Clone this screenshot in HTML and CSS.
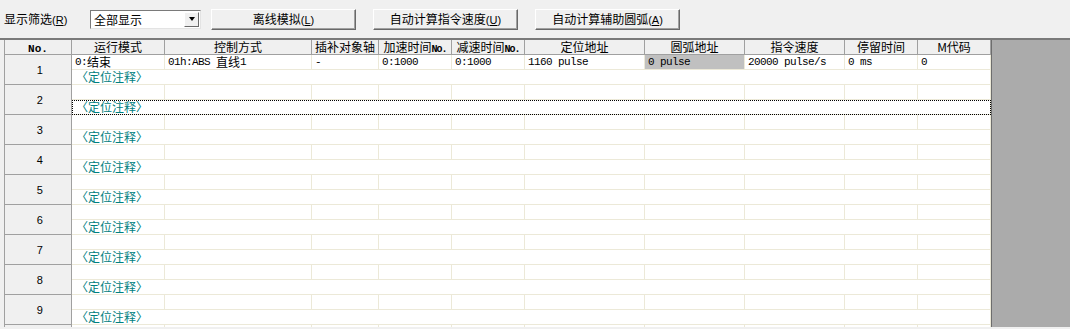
FILE: index.html
```html
<!DOCTYPE html>
<html lang="zh-CN">
<head>
    <meta charset="UTF-8">
    <title>定位数据</title>
    <link rel="stylesheet" href="styles.css">
</head>
<body>

    <div class="toolbar">
        <span class="label">显示筛选<span class="key">(<u>R</u>)</span></span>
        <div class="combo">
            <span class="combo-text">全部显示</span>
            <span class="combo-btn"><i class="arrow"></i></span>
        </div>
        <button class="btn">离线模拟<span class="key">(<u>L</u>)</span></button>
        <button class="btn">自动计算指令速度<span class="key">(<u>U</u>)</span></button>
        <button class="btn">自动计算辅助圆弧<span class="key">(<u>A</u>)</span></button>
    </div>

    <div class="panel">
        <table class="grid">
            <colgroup>
                <col style="width:67px">
                <col style="width:93px">
                <col style="width:147px">
                <col style="width:67px">
                <col style="width:73px">
                <col style="width:73px">
                <col style="width:120px">
                <col style="width:100px">
                <col style="width:100px">
                <col style="width:73px">
                <col style="width:73px">
            </colgroup>
            <thead>
                <tr class="head">
                    <th><span class="no">No.</span></th>
                    <th>运行模式</th>
                    <th>控制方式</th>
                    <th>插补对象轴</th>
                    <th>加速时间<span class="no-s">No.</span></th>
                    <th>减速时间<span class="no-s">No.</span></th>
                    <th>定位地址</th>
                    <th>圆弧地址</th>
                    <th>指令速度</th>
                    <th>停留时间</th>
                    <th>M代码</th>
                </tr>
            </thead>
            <tbody>
                <tr class="main">
                    <td class="num" rowspan="2">1</td>
                    <td>0:<span class="cjk">结束</span></td>
                    <td>01h:ABS <span class="cjk">直线</span>1</td>
                    <td>-</td>
                    <td>0:1000</td>
                    <td>0:1000</td>
                    <td>1160 pulse</td>
                    <td class="sel">0 pulse</td>
                    <td>20000 pulse/s</td>
                    <td>0 ms</td>
                    <td>0</td>
                </tr>
                <tr class="note"><td colspan="10">〈定位注释〉</td></tr>

                <tr class="main">
                    <td class="num" rowspan="2">2</td>
                    <td></td><td></td><td></td><td></td><td></td><td></td><td></td><td></td><td></td><td></td>
                </tr>
                <tr class="note"><td colspan="10" class="focus">〈定位注释〉</td></tr>

                <tr class="main">
                    <td class="num" rowspan="2">3</td>
                    <td></td><td></td><td></td><td></td><td></td><td></td><td></td><td></td><td></td><td></td>
                </tr>
                <tr class="note"><td colspan="10">〈定位注释〉</td></tr>

                <tr class="main">
                    <td class="num" rowspan="2">4</td>
                    <td></td><td></td><td></td><td></td><td></td><td></td><td></td><td></td><td></td><td></td>
                </tr>
                <tr class="note"><td colspan="10">〈定位注释〉</td></tr>

                <tr class="main">
                    <td class="num" rowspan="2">5</td>
                    <td></td><td></td><td></td><td></td><td></td><td></td><td></td><td></td><td></td><td></td>
                </tr>
                <tr class="note"><td colspan="10">〈定位注释〉</td></tr>

                <tr class="main">
                    <td class="num" rowspan="2">6</td>
                    <td></td><td></td><td></td><td></td><td></td><td></td><td></td><td></td><td></td><td></td>
                </tr>
                <tr class="note"><td colspan="10">〈定位注释〉</td></tr>

                <tr class="main">
                    <td class="num" rowspan="2">7</td>
                    <td></td><td></td><td></td><td></td><td></td><td></td><td></td><td></td><td></td><td></td>
                </tr>
                <tr class="note"><td colspan="10">〈定位注释〉</td></tr>

                <tr class="main">
                    <td class="num" rowspan="2">8</td>
                    <td></td><td></td><td></td><td></td><td></td><td></td><td></td><td></td><td></td><td></td>
                </tr>
                <tr class="note"><td colspan="10">〈定位注释〉</td></tr>

                <tr class="main">
                    <td class="num" rowspan="2">9</td>
                    <td></td><td></td><td></td><td></td><td></td><td></td><td></td><td></td><td></td><td></td>
                </tr>
                <tr class="note"><td colspan="10">〈定位注释〉</td></tr>

                <tr class="main">
                    <td class="num"></td>
                    <td></td><td></td><td></td><td></td><td></td><td></td><td></td><td></td><td></td><td></td>
                </tr>
            </tbody>
        </table>
        <div class="blank"></div>
    </div>

</body>
</html>
```

FILE: styles.css
```css
body {
    margin: 0;
    background-color: #f0f0f0;
    font-family: "Noto Sans CJK SC", "Liberation Sans", sans-serif;
    font-size: 12px;
    color: #000;
    overflow: hidden;
}

.key {
    font-family: "Liberation Sans", sans-serif;
    font-size: 11px;
}

/* toolbar */

.toolbar {
    height: 38px;
    display: flex;
    align-items: center;
    padding-left: 4px;
}

.label {
    width: 86px;
    line-height: 14px;
}

.combo {
    width: 111px;
    height: 19px;
    box-sizing: border-box;
    display: flex;
    align-items: center;
    justify-content: space-between;
    background: #fff;
    border: 1px solid;
    border-color: #7a7a7a #e3e3e3 #e3e3e3 #7a7a7a;
    margin-right: 10px;
    padding: 0 1px 0 3px;
}

.combo-text {
    line-height: 15px;
    font-size: 12px;
}

.combo-btn {
    width: 15px;
    height: 15px;
    box-sizing: border-box;
    background: #f0f0f0;
    border: 1px solid;
    border-color: #fff #696969 #696969 #fff;
    display: flex;
    align-items: center;
    justify-content: center;
}

.arrow {
    width: 0;
    height: 0;
    border-left: 3px solid transparent;
    border-right: 3px solid transparent;
    border-top: 4px solid #000;
}

.btn {
    width: 145px;
    height: 21px;
    margin-right: 17px;
    padding: 0;
    background: #f0f0f0;
    border: 1px solid;
    border-color: #fff #696969 #696969 #fff;
    box-shadow: inset -1px -1px #a0a0a0;
    font-family: "Noto Sans CJK SC", "Liberation Sans", sans-serif;
    font-size: 12px;
    line-height: 14px;
    color: #000;
}

/* grid */

.panel {
    display: flex;
    height: 289px;
    overflow: hidden;
    border-top: 2px solid #7a7a7a;
    box-sizing: border-box;
    padding-left: 4px;
    background: #f0f0f0;
}

.grid {
    width: 987px;
    flex: none;
    table-layout: fixed;
    border-collapse: separate;
    border-spacing: 0;
    border-left: 1px solid #a0a0a0;
    align-self: flex-start;
}

.grid tr {
    height: 15px;
}

.grid th,
.grid td {
    padding: 0;
    height: 14px;
    line-height: 14px;
    white-space: nowrap;
    vertical-align: top;
}

.grid td span {
    line-height: 14px;
    vertical-align: top;
}

.head th {
    background: #f0f0f0;
    font-weight: normal;
    text-align: center;
    border-right: 1px solid #a0a0a0;
    border-bottom: 1px solid #a0a0a0;
    font-size: 12px;
}

.no {
    font-family: "Liberation Mono", monospace;
    font-weight: bold;
    font-size: 11px;
    line-height: 0;
}

.no-s {
    font-family: "Liberation Mono", monospace;
    font-size: 10px;
    font-weight: bold;
    letter-spacing: -1px;
    line-height: 0;
}

.grid td.num {
    background: #f0f0f0;
    text-align: center;
    vertical-align: middle;
    font-family: "Liberation Sans", sans-serif;
    font-size: 11px;
    border-right: 1px solid #a0a0a0;
    border-bottom: 1px solid #a0a0a0;
}

.main td {
    background: #fff;
    font-family: "Liberation Mono", "Noto Sans CJK SC", monospace;
    font-size: 11px;
    letter-spacing: -0.6px;
    padding-left: 3px;
    border-right: 1px solid #ece9d8;
    border-bottom: 1px solid #ece9d8;
}

.cjk {
    font-family: "Noto Sans CJK SC", sans-serif;
    font-size: 12px;
    letter-spacing: 0;
}

.main td.sel {
    background: #c0c0c0;
}

.note td {
    background: #fff;
    color: #008080;
    font-size: 12px;
    padding-left: 4px;
    border-right: 1px solid #ece9d8;
    border-bottom: 1px solid #ece9d8;
}

.note td.focus {
    outline: 1px dotted #000;
    outline-offset: -1px;
}

.blank {
    flex: 1;
    background: #ababab;
    border-left: 1px solid #6d6d6d;
}
```
